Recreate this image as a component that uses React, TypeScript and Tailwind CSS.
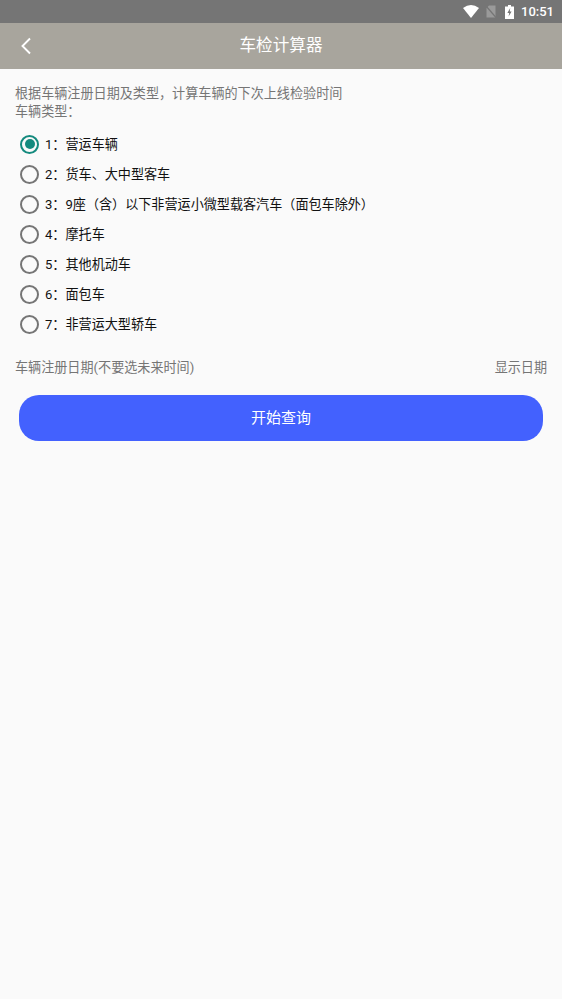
const items = [
  "1\uFF1A营运车辆",
  "2\uFF1A货车、大中型客车",
  "3\uFF1A9座\uFF08含\uFF09以下非营运小微型载客汽车\uFF08面包车除外\uFF09",
  "4\uFF1A摩托车",
  "5\uFF1A其他机动车",
  "6\uFF1A面包车",
  "7\uFF1A非营运大型轿车",
];

export default function App() {
  return (
    <div className="min-h-[999px] bg-[#fafafa] flex flex-col font-['Roboto','Noto_Sans_CJK_SC',sans-serif]">
      <div className="h-[23px] bg-[#757575] flex items-center justify-end pr-[8px]">
        <svg width="16" height="13" viewBox="0 0 16 13" className="mr-[7px]">
          <path d="M0 3 Q8 -3 16 3 L8 13 Z" fill="#fff" />
        </svg>
        <svg width="10" height="13" viewBox="0 0 10 13" className="mr-[9px]">
          <path d="M3 0.5 H9.5 V12.5 H0.5 V3 Z" fill="#9a9a9a" />
          <path d="M0 1 L10 12.5" stroke="#757575" strokeWidth="1.2" />
        </svg>
        <svg width="9" height="14" viewBox="0 0 9 14" className="mr-[7px]">
          <path d="M3 0 H6 V1.5 H9 V14 H0 V1.5 H3 Z" fill="#fff" />
          <path d="M5.2 3 L2.4 8 H4.2 L3.6 11.5 L6.6 6.5 H4.8 Z" fill="#757575" />
        </svg>
        <span className="text-[13px] leading-none font-medium text-white">10:51</span>
      </div>
      <div className="h-[46px] bg-[#a8a59d] flex items-center relative">
        <svg width="12" height="18" viewBox="0 0 12 18" className="absolute left-[20px] top-[14px]" fill="none">
          <path d="M10 1.5 L2.5 9 L10 16.5" stroke="#fff" strokeWidth="1.9" />
        </svg>
        <div className="w-full text-center text-white text-[16.6px] leading-none">车检计算器</div>
      </div>
      <div className="px-[15px] pt-[16px] text-[13.1px] leading-[18px] text-[#757575]">
        <p>{"根据车辆注册日期及类型\uFF0C计算车辆的下次上线检验时间"}</p>
        <p>{"车辆类型\uFF1A"}</p>
      </div>
      <div className="mt-[8px] flex flex-col">
        {items.map((t, i) => (
          <div key={t} className="h-[30px] flex items-center pl-[20px]">
            {i === 0 ? (
              <span className="w-[19px] h-[19px] rounded-full border-2 border-[#148a7e] flex items-center justify-center">
                <span className="w-[10px] h-[10px] rounded-full bg-[#148a7e]" />
              </span>
            ) : (
              <span className="w-[19px] h-[19px] rounded-full border-2 border-[#757575]" />
            )}
            <span className="ml-[6px] pt-[1px] text-[13.1px] text-[#111]">{t}</span>
          </div>
        ))}
      </div>
      <div className="mt-[20px] px-[15px] flex justify-between text-[13.1px] leading-[18px] text-[#757575]">
        <span>车辆注册日期(不要选未来时间)</span>
        <span>显示日期</span>
      </div>
      <button className="mt-[18px] mx-[19px] h-[46px] rounded-[20px] bg-[#4361fe] text-white text-[15px]">开始查询</button>
    </div>
  );
}
